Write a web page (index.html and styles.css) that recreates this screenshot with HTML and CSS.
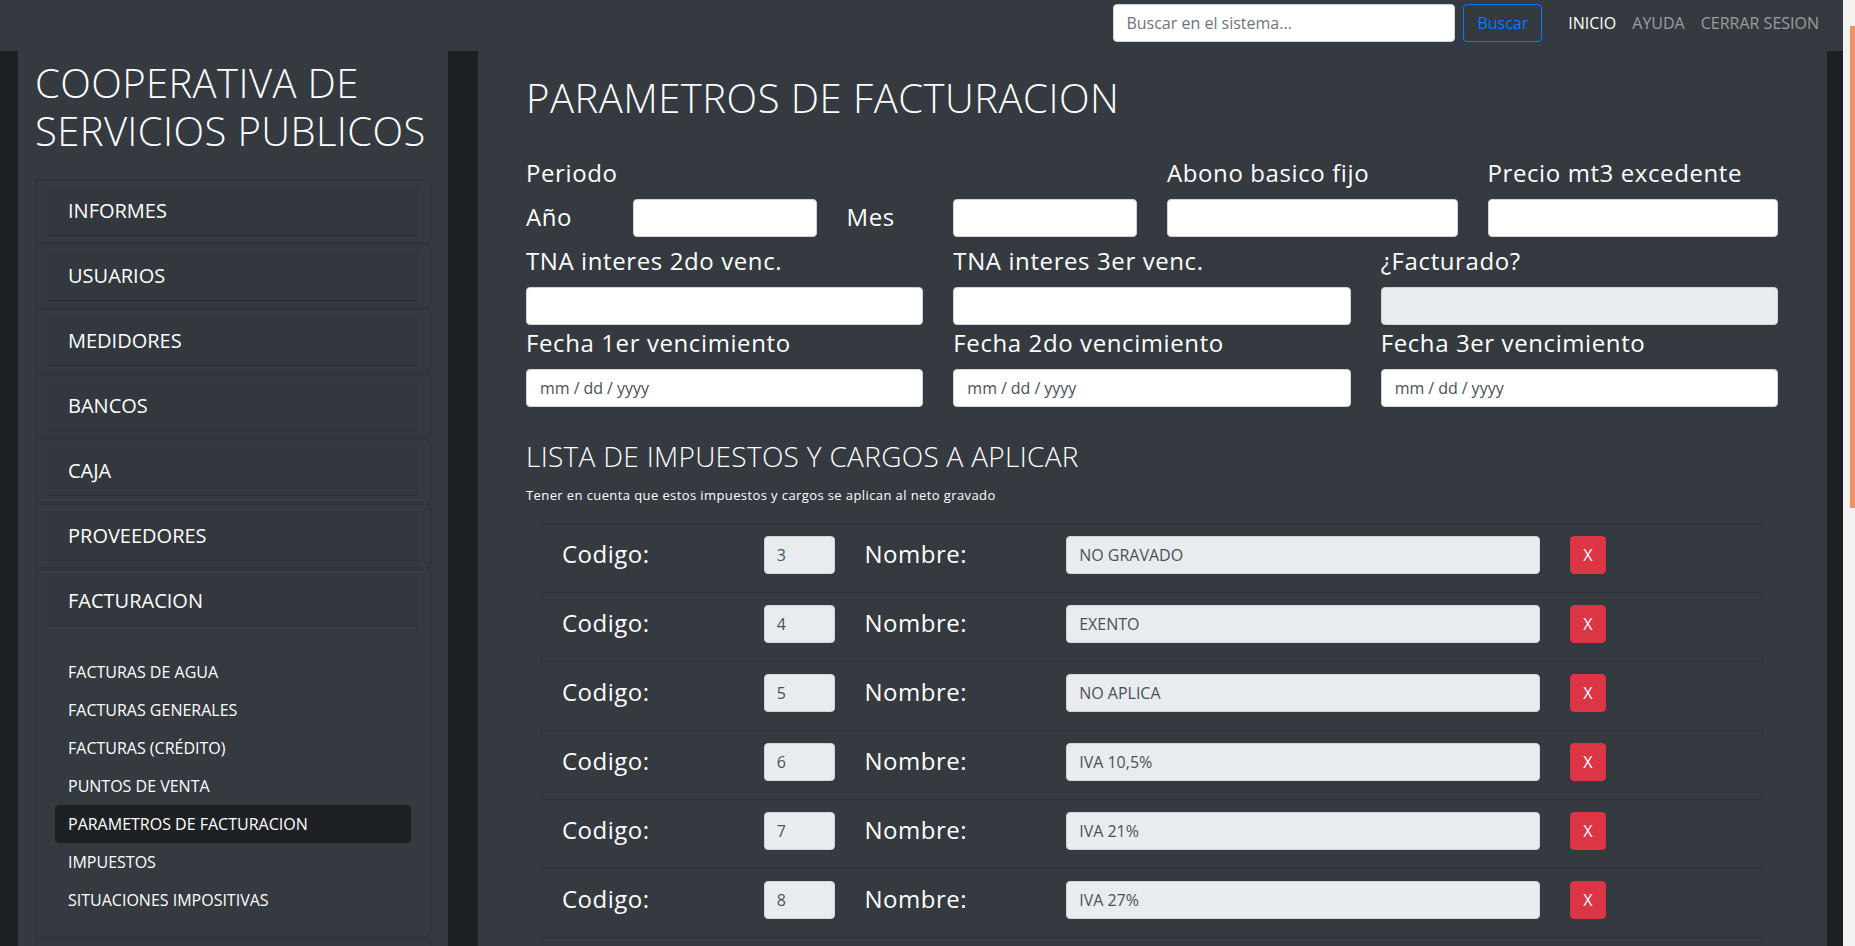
FILE: index.html
```html
<!DOCTYPE html>
<html lang="es">
<head>
  <meta charset="UTF-8">
  <title>Parametros de facturacion</title>
  <link rel="stylesheet" href="styles.css">
</head>
<body>

  <div class="page">

    <nav class="topbar">
      <form class="search" onsubmit="return false">
        <input class="form-control search-input" type="search" placeholder="Buscar en el sistema...">
        <button class="btn-outline" type="submit">Buscar</button>
      </form>
      <ul class="nav-links">
        <li><a class="active" href="#">INICIO</a></li>
        <li><a href="#">AYUDA</a></li>
        <li><a href="#">CERRAR SESION</a></li>
      </ul>
    </nav>

    <div class="layout">

      <!-- menu lateral -->
      <aside class="sidebar">
        <h1 class="brand">COOPERATIVA DE<br>SERVICIOS PUBLICOS</h1>

        <div class="menu">
          <div class="menu-card"><a class="menu-head" href="#">INFORMES</a></div>
          <div class="menu-card"><a class="menu-head" href="#">USUARIOS</a></div>
          <div class="menu-card"><a class="menu-head" href="#">MEDIDORES</a></div>
          <div class="menu-card"><a class="menu-head" href="#">BANCOS</a></div>
          <div class="menu-card"><a class="menu-head" href="#">CAJA</a></div>
          <div class="menu-card"><a class="menu-head" href="#">PROVEEDORES</a></div>
          <div class="menu-card">
            <a class="menu-head" href="#">FACTURACION</a>
            <ul class="submenu">
              <li><a href="#">FACTURAS DE AGUA</a></li>
              <li><a href="#">FACTURAS GENERALES</a></li>
              <li><a href="#">FACTURAS (CRÉDITO)</a></li>
              <li><a href="#">PUNTOS DE VENTA</a></li>
              <li><a class="current" href="#">PARAMETROS DE FACTURACION</a></li>
              <li><a href="#">IMPUESTOS</a></li>
              <li><a href="#">SITUACIONES IMPOSITIVAS</a></li>
            </ul>
          </div>
          <div class="menu-card menu-card-last"></div>
        </div>
      </aside>

      <!-- contenido -->
      <main class="content">
        <h1 class="page-title">PARAMETROS DE FACTURACION</h1>
        <hr class="rule">

        <form class="params" onsubmit="return false">
          <div class="grid">
            <div class="span-6">
              <label class="field-label">Periodo</label>
              <div class="grid">
                <label class="field-label span-2" for="anio">Año</label>
                <input class="form-control span-4" id="anio" type="text">
                <label class="field-label span-2" for="mes">Mes</label>
                <input class="form-control span-4" id="mes" type="text">
              </div>
            </div>
            <div class="span-3">
              <label class="field-label" for="abono">Abono basico fijo</label>
              <input class="form-control" id="abono" type="text">
            </div>
            <div class="span-3">
              <label class="field-label" for="precio">Precio mt3 excedente</label>
              <input class="form-control" id="precio" type="text">
            </div>

            <div class="span-4">
              <label class="field-label" for="tna2">TNA interes 2do venc.</label>
              <input class="form-control" id="tna2" type="text">
            </div>
            <div class="span-4">
              <label class="field-label" for="tna3">TNA interes 3er venc.</label>
              <input class="form-control" id="tna3" type="text">
            </div>
            <div class="span-4">
              <label class="field-label" for="facturado">¿Facturado?</label>
              <input class="form-control" id="facturado" type="text" readonly>
            </div>

            <div class="span-4">
              <label class="field-label" for="venc1">Fecha 1er vencimiento</label>
              <input class="form-control" id="venc1" type="date">
            </div>
            <div class="span-4">
              <label class="field-label" for="venc2">Fecha 2do vencimiento</label>
              <input class="form-control" id="venc2" type="date">
            </div>
            <div class="span-4">
              <label class="field-label" for="venc3">Fecha 3er vencimiento</label>
              <input class="form-control" id="venc3" type="date">
            </div>
          </div>
        </form>

        <hr class="rule rule-section">

        <h3 class="section-title">LISTA DE IMPUESTOS Y CARGOS A APLICAR</h3>
        <p class="note"><small>Tener en cuenta que estos impuestos y cargos se aplican al neto gravado</small></p>

        <ul class="tax-list" id="taxList"></ul>
      </main>

    </div>
  </div>

  <div class="scroll-track"><div class="scroll-thumb"></div></div>

  <script>
    const impuestos = [
      { codigo: 3, nombre: 'NO GRAVADO' },
      { codigo: 4, nombre: 'EXENTO' },
      { codigo: 5, nombre: 'NO APLICA' },
      { codigo: 6, nombre: 'IVA 10,5%' },
      { codigo: 7, nombre: 'IVA 21%' },
      { codigo: 8, nombre: 'IVA 27%' }
    ];

    function renderImpuestos() {
      const list = document.getElementById('taxList');
      list.innerHTML = '';
      impuestos.forEach((imp, i) => {
        const li = document.createElement('li');
        li.className = 'tax-row grid';
        li.innerHTML = `
          <span class="tax-label span-2">Codigo:</span>
          <input class="form-control span-1" type="text" readonly value="${imp.codigo}">
          <span class="tax-label span-2">Nombre:</span>
          <input class="form-control span-5" type="text" readonly value="${imp.nombre}">
          <button class="btn-danger span-1" type="button">X</button>
        `;
        li.querySelector('button').onclick = () => { impuestos.splice(i, 1); renderImpuestos(); };
        list.appendChild(li);
      });
    }

    renderImpuestos();
  </script>

</body>
</html>
```

FILE: styles.css
```css
/* ------------------------------------------------------------------ */
/*  Tema oscuro                                                        */
/* ------------------------------------------------------------------ */
:root {
  --bg:        #343a40;
  --bg-deep:   #1d2124;
  --line:      rgba(0,0,0,.125);
  --text:      #ffffff;
  --muted:     rgba(255,255,255,.5);
  --input-bg:  #ffffff;
  --input-ro:  #e9ecef;
  --input-bd:  #ced4da;
  --input-tx:  #495057;
  --primary:   #007bff;
  --danger:    #dc3545;
}

* { box-sizing: border-box; }

html, body { height: 100%; }

body {
  margin: 0;
  display: flex;
  overflow: hidden;
  background: var(--bg-deep);
  color: var(--text);
  font-family: "Open Sans", "Noto Sans", sans-serif;
  font-size: 16px;
  line-height: 1.5;
}

.page {
  flex: 1;
  min-width: 0;
  display: flex;
  flex-direction: column;
}

/* barra de desplazamiento del navegador */
.scroll-track {
  flex: none;
  width: 12px;
  padding: 26px 0 0 7px;
  background: #f3f2f0;
}
.scroll-thumb {
  height: 482px;
  background: #ef9068;
}

/* ------------------------------------------------------------------ */
/*  Controles                                                          */
/* ------------------------------------------------------------------ */
.form-control {
  display: block;
  width: 100%;
  height: 38px;
  padding: 6px 12px;
  font-family: inherit;
  font-size: 16px;
  line-height: 1.5;
  color: var(--input-tx);
  background: var(--input-bg);
  border: 1px solid var(--input-bd);
  border-radius: 4px;
}
.form-control[readonly] { background: var(--input-ro); }
.form-control::placeholder { color: #6c757d; }

input[type="date"]::-webkit-calendar-picker-indicator { display: none; }
input[type="date"]::-webkit-datetime-edit-text { padding: 0 3px; }

.btn-outline {
  height: 38px;
  padding: 6px 13px;
  font-family: inherit;
  font-size: 16px;
  color: var(--primary);
  background: transparent;
  border: 1px solid var(--primary);
  border-radius: 4px;
}

.btn-danger {
  justify-self: start;
  height: 38px;
  padding: 6px 12px;
  font-family: inherit;
  font-size: 16px;
  color: #fff;
  background: var(--danger);
  border: 1px solid var(--danger);
  border-radius: 4px;
}

/* ------------------------------------------------------------------ */
/*  Barra superior                                                     */
/* ------------------------------------------------------------------ */
.topbar {
  display: flex;
  justify-content: flex-end;
  align-items: center;
  height: 51px;
  padding: 4px 16px 9px;
  background: var(--bg);
}
.search {
  display: flex;
  gap: 8px;
  margin: 0;
}
.search-input { width: 342px; }

.nav-links {
  display: flex;
  list-style: none;
  margin: 0 0 0 18px;
  padding: 0;
}
.nav-links a {
  display: block;
  padding: 0 8px;
  font-size: 16px;
  color: var(--muted);
  text-decoration: none;
}
.nav-links a.active { color: #fff; }

/* ------------------------------------------------------------------ */
/*  Columnas                                                           */
/* ------------------------------------------------------------------ */
.layout {
  flex: 1;
  min-height: 0;
  display: flex;
  gap: 30px;
  padding: 0 16px 0 18px;
}

.sidebar {
  flex: none;
  width: 430px;
  padding: 8px 17px 0;
  background: var(--bg);
  overflow: hidden;
}
.brand {
  margin: 0 0 24px;
  font-size: 40px;
  line-height: 48px;
  font-weight: 300;
  letter-spacing: .4px;
  white-space: nowrap;
}

.menu-card {
  margin-bottom: 1px;
  padding: 7px 12px 6px;
  border: 1px solid var(--line);
  border-radius: 4px;
}
.menu-card-last { height: 64px; }
.menu-head {
  display: block;
  padding: 12px 20px;
  font-size: 20px;
  line-height: 24px;
  color: var(--text);
  text-decoration: none;
  background: rgba(0,0,0,.03);
  border-bottom: 1px solid var(--line);
}
.submenu {
  list-style: none;
  margin: 0 7px;
  padding: 27px 0 11px;
}
.submenu a {
  display: block;
  padding: 0 13px;
  line-height: 38px;
  color: var(--text);
  text-decoration: none;
  border-radius: 4px;
}
.submenu a.current { background: var(--bg-deep); }

.content {
  flex: 1;
  min-width: 0;
  padding: 23px 49px 0 48px;
  background: var(--bg);
  overflow: hidden;
}

/* ------------------------------------------------------------------ */
/*  Formulario de parametros                                           */
/* ------------------------------------------------------------------ */
.page-title {
  margin: 0;
  font-size: 40px;
  line-height: 48px;
  font-weight: 300;
  letter-spacing: .5px;
}
.rule {
  margin: 16px 0;
  border: 0;
  border-top: 1px solid rgba(0,0,0,.1);
}

.grid {
  display: grid;
  grid-template-columns: repeat(12, minmax(0, 1fr));
  column-gap: 30px;
  align-items: start;
}
.span-1 { grid-column: span 1; }
.span-2 { grid-column: span 2; }
.span-3 { grid-column: span 3; }
.span-4 { grid-column: span 4; }
.span-5 { grid-column: span 5; }
.span-6 { grid-column: span 6; }

.field-label {
  display: block;
  margin-bottom: 8px;
  font-size: 24px;
  line-height: 36px;
  letter-spacing: .6px;
  white-space: nowrap;
}

.section-title {
  margin: 0 0 8px;
  font-size: 28px;
  line-height: 33.6px;
  font-weight: 300;
  letter-spacing: .3px;
}
.note {
  margin: 0 0 16px;
  line-height: 24px;
}
.note small {
  font-size: 13px;
  letter-spacing: .4px;
}

/* ------------------------------------------------------------------ */
/*  Lista de impuestos                                                 */
/* ------------------------------------------------------------------ */
.tax-list {
  list-style: none;
  margin: 0 15px;
  padding: 0;
  border: 1px solid var(--line);
  border-radius: 4px;
}
.tax-row {
  padding: 12px 20px 18px;
  border-top: 1px solid var(--line);
}
.tax-row:first-child { border-top: 0; }
.tax-label {
  font-size: 24px;
  line-height: 35px;
  letter-spacing: .5px;
}
```
